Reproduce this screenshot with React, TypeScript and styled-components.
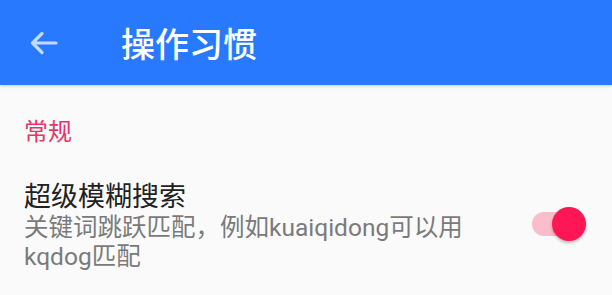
import React from "react";
import styled, { createGlobalStyle } from "styled-components";

const Global = createGlobalStyle`
  html, body { margin: 0; padding: 0; background: #fafafa; }
  body { font-family: Roboto, "Noto Sans CJK SC", sans-serif; }
`;

const Page = styled.div`
  width: 612px;
  height: 295px;
  background: #fafafa;
  overflow: hidden;
  display: flex;
  flex-direction: column;
`;

const Toolbar = styled.header`
  height: 85px;
  background: #2979ff;
  display: flex;
  align-items: center;
  flex-shrink: 0;
  box-shadow: 0 1px 3px rgba(0, 0, 0, 0.2);
`;

const BackButton = styled.button`
  width: 87px;
  height: 85px;
  border: 0;
  background: transparent;
  padding: 0 0 0 30px;
  display: flex;
  align-items: center;
  cursor: pointer;
`;

const Title = styled.h1`
  margin: 0 0 0 34px;
  font-family: "Noto Sans CJK SC", sans-serif;
  font-size: 34px;
  font-weight: 500;
  color: #ffffff;
  line-height: 1;
`;

const Section = styled.section`
  display: flex;
  flex-direction: column;
  padding: 0 24px;
`;

const SectionHeader = styled.div`
  font-family: "Noto Sans CJK SC", sans-serif;
  font-size: 24px;
  line-height: 30px;
  color: #e8336a;
  padding-top: 30px;
  height: 62px;
  box-sizing: border-box;
`;

const Row = styled.div`
  display: flex;
  align-items: center;
  padding-top: 30px;
`;

const RowText = styled.div`
  flex: 1;
  display: flex;
  flex-direction: column;
`;

const RowTitle = styled.div`
  font-family: "Noto Sans CJK SC", sans-serif;
  font-size: 27px;
  line-height: 36px;
  color: #212121;
`;

const RowSummary = styled.div`
  font-family: Roboto, "Noto Sans CJK SC", sans-serif;
  font-size: 24.5px;
  line-height: 29px;
  color: #7a7a7a;
  width: 462px;
`;

const SwitchTrack = styled.div<{ $on: boolean }>`
  position: relative;
  width: 48px;
  height: 24px;
  border-radius: 12px;
  background: ${(p) => (p.$on ? "#fbbccb" : "#bdbdbd")};
  margin-right: 8px;
  margin-top: 0px;
`;

const SwitchThumb = styled.div<{ $on: boolean }>`
  position: absolute;
  top: -5px;
  left: ${(p) => (p.$on ? "20px" : "-4px")};
  width: 34px;
  height: 34px;
  border-radius: 50%;
  background: ${(p) => (p.$on ? "#ff1655" : "#f1f1f1")};
  box-shadow: 0 2px 3px rgba(0, 0, 0, 0.25);
`;

const Switch = ({ on }: { on: boolean }) => (
  <SwitchTrack $on={on}>
    <SwitchThumb $on={on} />
  </SwitchTrack>
);

export default function App() {
  return (
    <>
      <Global />
      <Page>
        <Toolbar>
          <BackButton aria-label="返回">
            <svg width="28" height="24" viewBox="0 0 28 24" fill="none">
              <path
                d="M26 12H3M12 2.5L2.5 12L12 21.5"
                stroke="rgba(255,255,255,0.72)"
                strokeWidth="3.2"
                strokeLinecap="round"
                strokeLinejoin="round"
              />
            </svg>
          </BackButton>
          <Title>操作习惯</Title>
        </Toolbar>
        <Section>
          <SectionHeader>常规</SectionHeader>
          <Row>
            <RowText>
              <RowTitle>超级模糊搜索</RowTitle>
              <RowSummary>关键词跳跃匹配，例如kuaiqidong可以用kqdog匹配</RowSummary>
            </RowText>
            <Switch on />
          </Row>
        </Section>
      </Page>
    </>
  );
}
